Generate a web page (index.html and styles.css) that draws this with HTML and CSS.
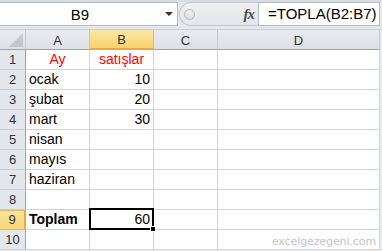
FILE: index.html
```html
<!DOCTYPE html>
<html lang="tr">
<head>
<meta charset="utf-8">
<title>Excel TOPLA</title>
<link rel="stylesheet" href="styles.css">
</head>
<body>
<div class="app">
  <div class="fbar">
    <div class="namebox"><span class="name">B9</span><span class="arrow"></span></div>
    <div class="btns">
      <div class="pill"><span class="circle"></span><span class="fx">fx</span></div>
    </div>
    <div class="formula">=TOPLA(B2:B7)</div>
  </div>
  <div class="sheet">
    <div class="corner"><span class="tri"></span></div>
    <div class="ch">A</div>
    <div class="ch sel">B</div>
    <div class="ch">C</div>
    <div class="ch">D</div>

    <div class="rh">1</div>
    <div class="c center red">Ay</div>
    <div class="c center red">satışlar</div>
    <div class="c"></div>
    <div class="c"></div>

    <div class="rh">2</div>
    <div class="c">ocak</div>
    <div class="c num">10</div>
    <div class="c"></div>
    <div class="c"></div>

    <div class="rh">3</div>
    <div class="c">şubat</div>
    <div class="c num">20</div>
    <div class="c"></div>
    <div class="c"></div>

    <div class="rh">4</div>
    <div class="c">mart</div>
    <div class="c num">30</div>
    <div class="c"></div>
    <div class="c"></div>

    <div class="rh">5</div>
    <div class="c">nisan</div>
    <div class="c"></div>
    <div class="c"></div>
    <div class="c"></div>

    <div class="rh">6</div>
    <div class="c">mayıs</div>
    <div class="c"></div>
    <div class="c"></div>
    <div class="c"></div>

    <div class="rh">7</div>
    <div class="c">haziran</div>
    <div class="c"></div>
    <div class="c"></div>
    <div class="c"></div>

    <div class="rh">8</div>
    <div class="c"></div>
    <div class="c"></div>
    <div class="c"></div>
    <div class="c"></div>

    <div class="rh sel">9</div>
    <div class="c bold">Toplam</div>
    <div class="c num active">60<span class="handle"></span></div>
    <div class="c"></div>
    <div class="c"></div>

    <div class="rh">10</div>
    <div class="c"></div>
    <div class="c"></div>
    <div class="c"></div>
    <div class="c"></div>
  </div>
  <div class="wm">excelgezegeni.com</div>
</div>
</body>
</html>
```

FILE: styles.css
```css
* { box-sizing: border-box; }
html, body { margin: 0; padding: 0; }
body {
  width: 382px;
  height: 251px;
  overflow: hidden;
  background: #e8ebef;
  font-family: "Liberation Sans", Arial, sans-serif;
}
.app {
  position: relative;
  width: 382px;
  height: 251px;
}

/* formula bar */
.fbar {
  display: flex;
  height: 30px;
  padding-top: 2px;
  background: linear-gradient(#d8dde4 0, #d8dde4 2px, #e4e7eb 2px);
  border-bottom: 1px solid #c9ced5;
}
.namebox {
  position: relative;
  width: 178px;
  height: 24px;
  background: #fff;
  border: 1px solid #b6bcc5;
  border-left: none;
  display: flex;
  align-items: center;
}
.name {
  width: 160px;
  text-align: center;
  font-size: 15px;
  color: #000;
}
.arrow {
  width: 0;
  height: 0;
  margin-left: 5px;
  border-left: 4px solid transparent;
  border-right: 4px solid transparent;
  border-top: 4px solid #333;
}
.btns {
  width: 80px;
  height: 24px;
  padding-left: 1px;
}
.pill {
  display: flex;
  align-items: center;
  height: 24px;
  border: 1px solid #c2c7ce;
  border-right: none;
  border-radius: 12px 0 0 12px;
  background: linear-gradient(#eef0f3, #e2e5e9);
}
.circle {
  width: 11px;
  height: 11px;
  margin-left: 4px;
  border-radius: 50%;
  border: 1px solid #b4b9c0;
  background: radial-gradient(circle at 50% 30%, #f4f5f7 0, #dcdfe3 70%);
}
.fx {
  margin-left: auto;
  margin-right: 4px;
  font-family: "Liberation Serif", "Times New Roman", serif;
  font-style: italic;
  font-weight: bold;
  font-size: 15px;
  color: #4a4a4a;
  letter-spacing: -1px;
}
.formula {
  width: 122px;
  height: 24px;
  background: #fff;
  border: 1px solid #b6bcc5;
  padding-left: 9px;
  font-size: 15px;
  line-height: 22px;
  color: #000;
  white-space: nowrap;
  overflow: hidden;
}

/* sheet */
.sheet {
  display: grid;
  grid-template-columns: 26px 64px 64px 64px 162px;
  grid-template-rows: 20px repeat(10, 20px);
  width: 380px;
  background: #fff;
}
.corner, .ch, .rh {
  background: linear-gradient(#e8ebef, #dde1e6);
  color: #333;
  font-size: 13px;
  display: flex;
  align-items: center;
  justify-content: center;
}
.corner {
  position: relative;
  border-right: 1px solid #c4c9d0;
  border-bottom: 1px solid #9da3ab;
}
.tri {
  position: absolute;
  right: 2px;
  bottom: 2px;
  width: 0;
  height: 0;
  border-left: 14px solid transparent;
  border-bottom: 14px solid #c4c8ce;
}
.ch {
  border-right: 1px solid #c4c9d0;
  border-bottom: 1px solid #9da3ab;
  padding-top: 1px;
}
.rh {
  background: #e4e7eb;
  border-right: 1px solid #9da3ab;
  border-bottom: 1px solid #c9ced4;
}
.ch.sel {
  background: linear-gradient(#fbe7a6, #f7d36a);
  border-right: 1px solid #e9b45a;
  border-bottom: 2px solid #f0a640;
  color: #333;
}
.rh.sel {
  background: linear-gradient(#fbe5a0, #f8d776);
  border-right: 2px solid #f0a640;
  border-bottom: 1px solid #e9b45a;
  box-shadow: inset 0 1px 0 #e9b45a;
}
.c {
  position: relative;
  border-right: 1px solid #d4d4d4;
  border-bottom: 1px solid #d4d4d4;
  font-size: 14px;
  color: #000;
  padding: 0 3px;
  line-height: 19px;
  white-space: nowrap;
}
.center { text-align: center; }
.red { color: #ff0000; }
.num { text-align: right; }
.bold { font-weight: bold; }
.active::after {
  content: "";
  position: absolute;
  left: -1px;
  top: -2px;
  right: -1px;
  bottom: -1px;
  border: 2px solid #000;
}
.handle {
  position: absolute;
  right: -3px;
  bottom: -3px;
  width: 6px;
  height: 6px;
  background: #000;
  border: 1px solid #fff;
  z-index: 2;
}

.wm {
  position: absolute;
  right: 6px;
  bottom: 3px;
  font-family: "DejaVu Sans", Verdana, sans-serif;
  font-size: 11px;
  letter-spacing: -0.1px;
  color: #c4c4c4;
}
```
